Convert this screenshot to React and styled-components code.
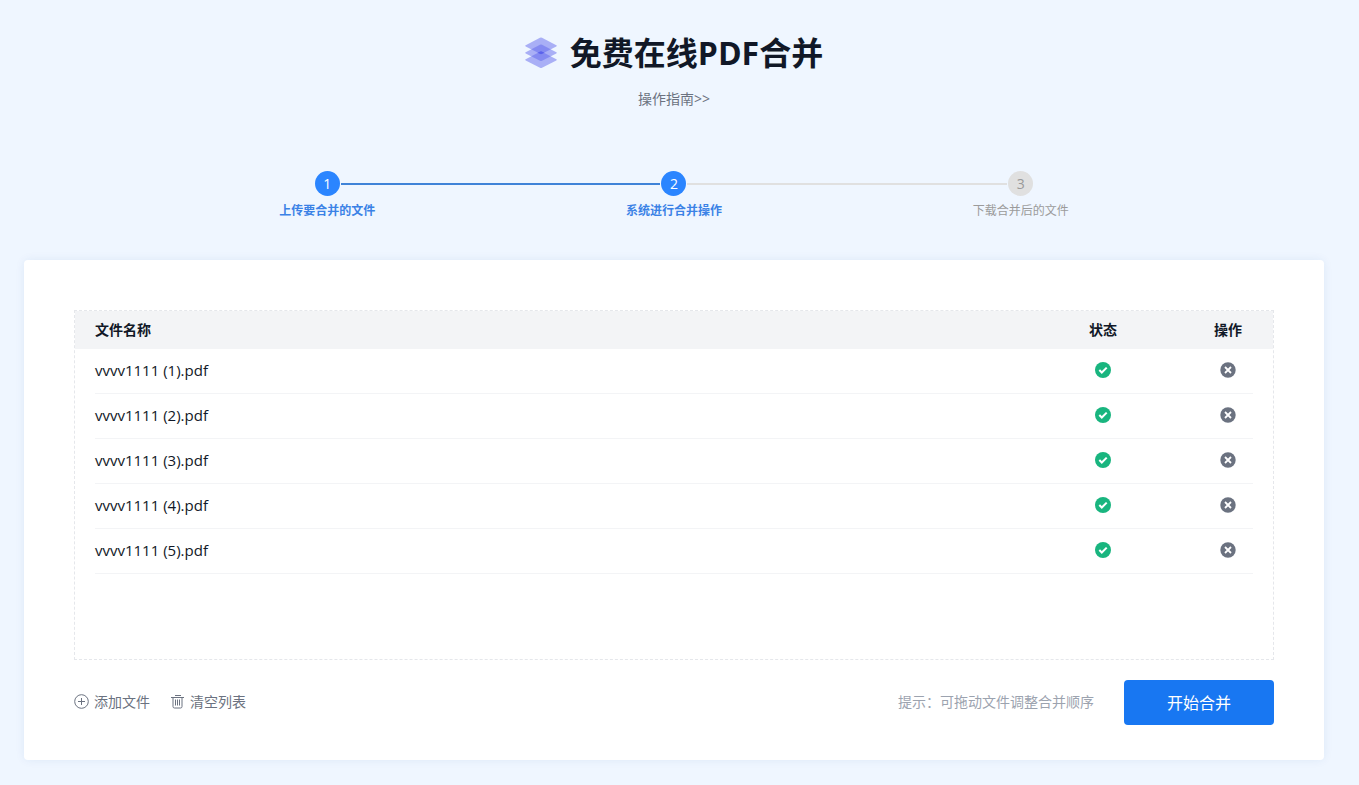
import React, { useState } from 'react';
import styled, { createGlobalStyle } from 'styled-components';

const GlobalStyle = createGlobalStyle`
  * {
    box-sizing: border-box;
  }

  body {
    margin: 0;
    background-color: #eff6ff;
    color: #111827;
    font-family: 'Open Sans', 'Noto Sans CJK SC', sans-serif;
    font-size: 14px;
    line-height: 20px;
  }
`;

const Page = styled.main`
  padding: 32px 35px 24px 24px;
`;

const Header = styled.header`
  display: flex;
  flex-direction: column;
  align-items: center;
  gap: 15px;
`;

const Title = styled.h1`
  display: flex;
  align-items: center;
  gap: 13px;
  margin: 0;
  font-size: 32px;
  line-height: 42px;
  font-weight: 700;
`;

const GuideLink = styled.a`
  color: #6b7280;
  text-decoration: none;

  &:hover {
    text-decoration: underline;
  }
`;

const Steps = styled.ol`
  display: grid;
  grid-template-columns: repeat(3, 1fr);
  width: 80%;
  margin: 62px auto 0;
  padding: 0;
  list-style: none;
`;

const Step = styled.li`
  display: flex;
  flex-direction: column;
  align-items: center;
  gap: 5px;
  color: ${props => (props.$active ? '#3b82e6' : '#9b9b9b')};
  font-size: 12px;
  font-weight: ${props => (props.$active ? 700 : 400)};
`;

const StepTrack = styled.div`
  display: grid;
  grid-template-columns: 1fr 25px 1fr;
  align-items: center;
  gap: 1px;
  width: 100%;
`;

const StepLine = styled.span`
  height: 2px;
  background-color: ${props => props.$color};
`;

const StepCircle = styled.span`
  width: 25px;
  height: 25px;
  border-radius: 50%;
  background-color: ${props => (props.$active ? '#2b85ff' : '#e0e0e0')};
  color: ${props => (props.$active ? '#fff' : '#999')};
  font-size: 14px;
  font-weight: 400;
  line-height: 25px;
  text-align: center;
`;

const Card = styled.section`
  width: 100%;
  margin-top: 39px;
  padding: 50px 50px 35px;
  border-radius: 4px;
  background-color: #fff;
  box-shadow: 0 0 10px rgba(30, 80, 160, 0.08);
`;

const FileBox = styled.div`
  min-height: 350px;
  border: 1px dashed #e5e7eb;
`;

const FileTable = styled.table`
  display: block;
  width: 100%;
`;

const TableHead = styled.thead`
  display: block;
  padding: 0 20px;
  background-color: #f3f4f6;
`;

const TableBody = styled.tbody`
  display: block;
  padding: 0 20px;
`;

const Row = styled.tr`
  display: grid;
  grid-template-columns: 1fr 50px 50px;
  column-gap: 75px;
  align-items: center;
  height: ${props => (props.$head ? '38px' : '45px')};
  padding-bottom: ${props => (props.$head ? '0' : '2px')};
  border-bottom: ${props => (props.$head ? 'none' : '1px solid #f3f4f6')};
`;

const HeadCell = styled.th`
  padding: 0;
  font-weight: 700;
  text-align: ${props => props.$align || 'left'};
`;

const Cell = styled.td`
  display: flex;
  justify-content: ${props => props.$align || 'flex-start'};
  padding: 0;
  font-size: 15px;
`;

const IconButton = styled.button`
  display: flex;
  padding: 0;
  border: none;
  background: none;
  cursor: pointer;
`;

const Footer = styled.div`
  display: flex;
  align-items: center;
  gap: 20px;
  margin-top: 20px;
`;

const TextButton = styled.button`
  display: flex;
  align-items: center;
  gap: 5px;
  padding: 0 0 2px;
  border: none;
  background: none;
  color: #6b7280;
  font: inherit;
  cursor: pointer;
`;

const Hint = styled.span`
  margin-left: auto;
  padding-bottom: 2px;
  color: #9ca3af;
`;

const MergeButton = styled.button`
  width: 150px;
  height: 45px;
  margin-left: 10px;
  padding: 0 0 2px;
  border: none;
  border-radius: 4px;
  background-color: #1877f2;
  color: #fff;
  font-family: inherit;
  font-size: 16px;
  cursor: pointer;
`;

const LayersIcon = () => (
  <svg width="32" height="32" viewBox="0 0 32 32" fill="#5b62ec" aria-hidden="true">
    <path fillOpacity="0.48" d="M15 .8q1-.5 2 0l14.300 7.400q1 .6 0 1.200l-14.300 7.400q-1 .5-2 0l-14.300-7.400q-1-.6 0-1.200z" />
    <path fillOpacity="0.48" d="M15 7.800q1-.5 2 0l14.300 7.400q1 .6 0 1.200l-14.300 7.400q-1 .5-2 0l-14.300-7.400q-1-.6 0-1.200z" />
    <path fillOpacity="0.48" d="M15 14.800q1-.5 2 0l14.300 7.400q1 .6 0 1.200l-14.300 7.400q-1 .5-2 0l-14.300-7.400q-1-.6 0-1.200z" />
    <path d="M12.500 15.800l3.500-1.500 3.500 1.500-3.500 1.500z" />
  </svg>
);

const CheckIcon = () => (
  <svg width="16" height="16" viewBox="0 0 16 16" role="img" aria-label="完成">
    <circle cx="8" cy="8" r="8" fill="#19b57f" />
    <path d="M4.300 8l2.500 2.500 4.900-4.900" fill="none" stroke="#fff" strokeWidth="2" />
  </svg>
);

const RemoveIcon = () => (
  <svg width="16" height="16" viewBox="0 0 16 16" aria-hidden="true">
    <circle cx="8" cy="8" r="7.700" fill="#6b7280" />
    <path d="M5 5l6 6M11 5l-6 6" stroke="#fff" strokeWidth="1.800" />
  </svg>
);

const AddIcon = () => (
  <svg width="15" height="15" viewBox="0 0 15 15" fill="none" stroke="#6b7280" aria-hidden="true">
    <circle cx="7.500" cy="7.500" r="6.800" />
    <path d="M7.500 4v7M4 7.500h7" />
  </svg>
);

const TrashIcon = () => (
  <svg width="15" height="15" viewBox="0 0 15 15" fill="none" stroke="#6b7280" aria-hidden="true">
    <path d="M5 1.500h6M1 3.500h13" />
    <path d="M3 4v8.500q0 1.500 1.500 1.500h6q1.500 0 1.500-1.500V4" />
    <path d="M5.500 5.500v6M7.500 5.500v6M9.500 5.500v6" />
  </svg>
);

const BLUE = '#3f83d8';
const GRAY = '#e0e0e0';

const steps = [
  { label: '上传要合并的文件', active: true, left: 'transparent', right: BLUE },
  { label: '系统进行合并操作', active: true, left: BLUE, right: GRAY },
  { label: '下载合并后的文件', active: false, left: GRAY, right: 'transparent' },
];

function App() {
  const [files, setFiles] = useState([1, 2, 3, 4, 5].map(n => `vvvv1111 (${n}).pdf`));

  const removeFile = name => {
    setFiles(files.filter(file => file !== name));
  };

  return (
    <>
      <GlobalStyle />
      <Page>
        <Header>
          <Title>
            <LayersIcon />
            免费在线PDF合并
          </Title>
          <GuideLink href="#guide">操作指南&gt;&gt;</GuideLink>
        </Header>

        <Steps>
          {steps.map((step, index) => (
            <Step key={step.label} $active={step.active}>
              <StepTrack>
                <StepLine $color={step.left} />
                <StepCircle $active={step.active}>{index + 1}</StepCircle>
                <StepLine $color={step.right} />
              </StepTrack>
              {step.label}
            </Step>
          ))}
        </Steps>

        <Card>
          <FileBox>
            <FileTable>
              <TableHead>
                <Row $head>
                  <HeadCell>文件名称</HeadCell>
                  <HeadCell $align="center">状态</HeadCell>
                  <HeadCell $align="center">操作</HeadCell>
                </Row>
              </TableHead>
              <TableBody>
                {files.map(file => (
                  <Row key={file}>
                    <Cell>{file}</Cell>
                    <Cell $align="center"><CheckIcon /></Cell>
                    <Cell $align="center">
                      <IconButton aria-label="删除" onClick={() => removeFile(file)}>
                        <RemoveIcon />
                      </IconButton>
                    </Cell>
                  </Row>
                ))}
              </TableBody>
            </FileTable>
          </FileBox>

          <Footer>
            <TextButton>
              <AddIcon />
              添加文件
            </TextButton>
            <TextButton onClick={() => setFiles([])}>
              <TrashIcon />
              清空列表
            </TextButton>
            <Hint>提示：可拖动文件调整合并顺序</Hint>
            <MergeButton>开始合并</MergeButton>
          </Footer>
        </Card>
      </Page>
    </>
  );
}

export default App;
